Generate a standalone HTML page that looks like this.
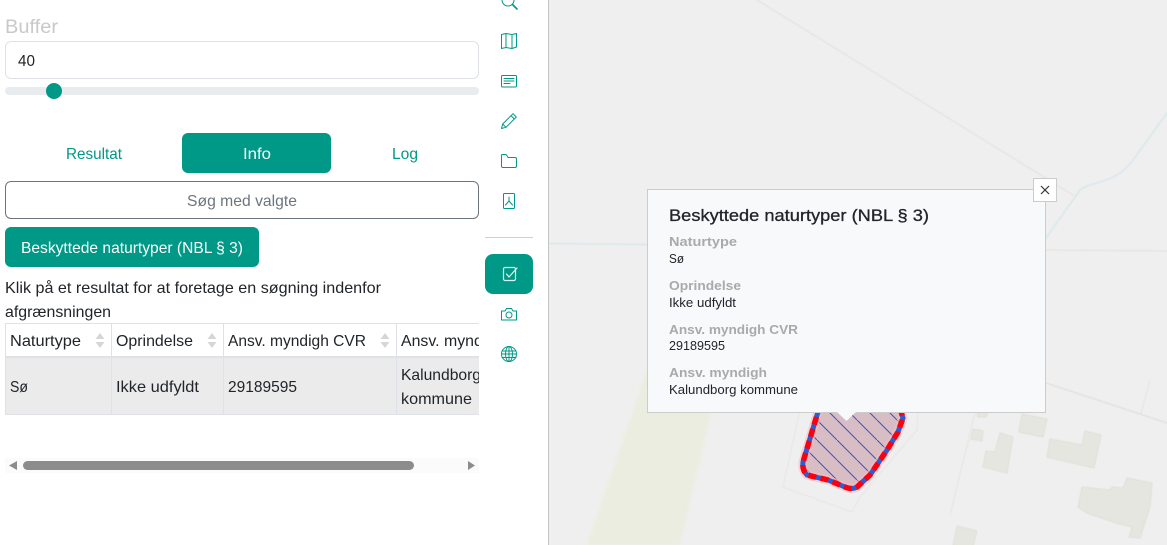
<!DOCTYPE html>
<html lang="da">
<head>
<meta charset="utf-8">
<title>Buffer</title>
<style>
html,body{margin:0;padding:0;width:1167px;height:545px;overflow:hidden;background:#fff}
body{position:relative;font-family:"Liberation Sans",sans-serif}
.b{position:absolute;box-sizing:border-box}
svg.o{position:absolute;left:0;top:0}
svg text{font-family:"Liberation Sans",sans-serif}
</style>
</head>
<body>
<!-- Map -->
<svg class="o" width="1167" height="545" viewBox="0 0 1167 545">
  <defs>
    <pattern id="h" width="20" height="20" patternUnits="userSpaceOnUse" patternTransform="translate(-3 0)">
      <path d="M-2,-2L22,22" stroke="#3a55c8" stroke-width="1"/>
    </pattern>
    <filter id="bl" x="-10%" y="-10%" width="120%" height="120%"><feGaussianBlur stdDeviation="1.5"/></filter>
    <filter id="sf" x="-5%" y="-5%" width="110%" height="110%"><feGaussianBlur stdDeviation="0.4"/></filter>
  </defs>
  <rect x="549" y="0" width="618" height="545" fill="#f0efef"/>
  <polygon points="650,360 724,360 680,545 587,545" fill="#ebede1" filter="url(#bl)"/>
  <g fill="none" stroke-linecap="round" filter="url(#sf)">
    <path d="M757,0L1073,195" stroke="#e3e3e1" stroke-width="1.300"/>
    <path d="M549,243.500L648,244.500" stroke="#d9e9ec" stroke-width="1.800"/>
    <path d="M1046,238L1080,190Q1084,187 1090,185Q1108,180 1117,175Q1125,170 1133,160L1167,113" stroke="#d9e8eb" stroke-width="1.800"/>
    <path d="M1046,250L1167,251" stroke="#e3e3e1" stroke-width="1.300"/>
    <path d="M1046,383L1167,423" stroke="#dfdfdd" stroke-width="1.400"/>
    <path d="M1150,380L1141,413" stroke="#e3e3e1" stroke-width="1"/>
    <path d="M975,413L950,515" stroke="#e3e3e1" stroke-width="1"/>
    <path d="M800,410L783,487L852,512L860,497L917,430L918,410" stroke="#e5e5e3" stroke-width="1"/>
  </g>
  <g fill="#e6e6e0" stroke="#dfded8" stroke-width="1" filter="url(#sf)">
    <polygon points="1022,414 1047,419 1043,437 1019,432"/>
    <polygon points="973,429 983,431 982,441 971,439"/>
    <polygon points="977,412 988,412 986,417 978,417"/>
    <polygon points="1000,433 1013,437 1007,473 983,467 986,451 995,452"/>
    <polygon points="1050,439 1082,445 1085,431 1101,435 1094,468 1047,457"/>
    <polygon points="1082,487 1110,490 1112,487 1123,488 1127,478 1152,483 1150,507 1140,538 1129,537 1132,527 1116,523 1087,513 1078,507"/>
    <polygon points="957,526 977,531 973,546 953,546"/>
  </g>
  <path d="M820,405L803,462Q802,470 807,475L828,480L845,487Q852,490 857,487L870,475L887,450L898,432L903,418L899,405Z" fill="#d8bdc4"/>
  <path d="M820,405L803,462Q802,470 807,475L828,480L845,487Q852,490 857,487L870,475L887,450L898,432L903,418L899,405Z" fill="url(#h)"/>
  <path d="M820,405L803,462Q802,470 807,475L828,480L845,487Q852,490 857,487L870,475L887,450L898,432L903,418L899,405" fill="none" stroke="#ffb9b9" stroke-opacity=".6" stroke-width="9"/>
  <path d="M820,405L803,462Q802,470 807,475L828,480L845,487Q852,490 857,487L870,475L887,450L898,432L903,418L899,405" fill="none" stroke="#2a5fd0" stroke-width="5"/>
  <path d="M820,405L803,462Q802,470 807,475L828,480L845,487Q852,490 857,487L870,475L887,450L898,432L903,418L899,405" fill="none" stroke="#fa0010" stroke-width="5.500" stroke-dasharray="8 4.500"/>
</svg>

<!-- Left panel -->
<div class="b" style="left:0;top:0;width:548px;height:545px;background:#fff"></div>
<div class="b" style="left:548px;top:0;width:1px;height:545px;background:#c4c4c4"></div>
<div class="b" style="left:5px;top:41px;width:474px;height:38px;border:1px solid #dee2e6;border-radius:6px;background:#fff"></div>
<div class="b" style="left:5px;top:87px;width:474px;height:8px;border-radius:4px;background:#e9ecef"></div>
<div class="b" style="left:46px;top:83px;width:16px;height:16px;border-radius:50%;background:#009886"></div>
<div class="b" style="left:182px;top:133px;width:149px;height:40px;border-radius:6px;background:#009886"></div>
<div class="b" style="left:5px;top:181px;width:474px;height:38px;border:1px solid #6c757d;border-radius:6px;background:#fff"></div>
<div class="b" style="left:5px;top:227px;width:254px;height:40px;border-radius:6px;background:#009886"></div>
<div class="b" style="left:485px;top:237px;width:48px;height:1px;background:#cfcfcf"></div>
<div class="b" style="left:485px;top:254px;width:48px;height:40px;border-radius:8px;background:#009886"></div>

<!-- Table -->
<div class="b" style="left:5px;top:323px;width:474px;height:93px;overflow:hidden">
  <div class="b" style="left:0;top:35px;width:474px;height:57px;background:#ebebeb"></div>
  <div class="b" style="left:0;top:0;width:474px;height:1px;background:#dee2e6"></div>
  <div class="b" style="left:0;top:33px;width:474px;height:2px;background:#dee2e6"></div>
  <div class="b" style="left:0;top:91px;width:474px;height:1px;background:#dee2e6"></div>
  <div class="b" style="left:0;top:0;width:1px;height:92px;background:#dee2e6"></div>
  <div class="b" style="left:106px;top:0;width:1px;height:92px;background:#dee2e6"></div>
  <div class="b" style="left:218px;top:0;width:1px;height:92px;background:#dee2e6"></div>
  <div class="b" style="left:391px;top:0;width:1px;height:92px;background:#dee2e6"></div>
</div>

<!-- Scrollbar -->
<div class="b" style="left:5px;top:458px;width:474px;height:15px;background:#fbfbfb"></div>
<div class="b" style="left:23px;top:461px;width:391px;height:9px;border-radius:4.500px;background:#8c8c8c"></div>

<!-- Popup -->
<div class="b" style="left:647px;top:189px;width:399px;height:224px;background:#f8f9fb;border:1px solid #cccccc"></div>
<div class="b" style="left:1033px;top:178px;width:24px;height:24px;background:#fff;border:1px solid #ccc"></div>

<!-- Overlay: text and icons -->
<svg class="o" width="1167" height="545" viewBox="0 0 1167 545">
  <defs><clipPath id="tc"><rect x="5" y="320" width="474" height="100"/></clipPath></defs>

  <polygon points="837,412 856,412 846.500,421" fill="#f8f9fb"/>
  <path d="M1041,186L1049,194M1049,186L1041,194" stroke="#333" stroke-width="1.200" fill="none"/>

  <polygon points="9,465.500 17,461 17,470" fill="#8c8c8c"/>
  <polygon points="475,465.500 468,461 468,470" fill="#8c8c8c"/>

  <g fill="#d6d6d6">
    <polygon points="100,333 104.500,339 95.500,339"/><polygon points="100,348 104.500,342 95.500,342"/>
    <polygon points="212,333 216.500,339 207.500,339"/><polygon points="212,348 216.500,342 207.500,342"/>
    <polygon points="385,333 389.500,339 380.500,339"/><polygon points="385,348 389.500,342 380.500,342"/>
  </g>

  <g font-size="19" fill="#c9c9c9"><text x="5" y="33" textLength="53" lengthAdjust="spacingAndGlyphs">Buffer</text></g>
  <g font-size="16" fill="#212529">
    <text x="18" y="66" textLength="17" lengthAdjust="spacingAndGlyphs">40</text>
    <text x="5" y="293" textLength="376" lengthAdjust="spacingAndGlyphs">Klik på et resultat for at foretage en søgning indenfor</text>
    <text x="5" y="317" textLength="106" lengthAdjust="spacingAndGlyphs">afgrænsningen</text>
  </g>
  <g font-size="16" fill="#009886">
    <text x="66" y="159" textLength="56" lengthAdjust="spacingAndGlyphs">Resultat</text>
    <text x="392" y="159" textLength="26" lengthAdjust="spacingAndGlyphs">Log</text>
  </g>
  <text x="243" y="159" font-size="16" fill="#fff" textLength="28" lengthAdjust="spacingAndGlyphs">Info</text>
  <text x="187" y="206" font-size="16" fill="#6c757d" textLength="110" lengthAdjust="spacingAndGlyphs">Søg med valgte</text>
  <text x="21" y="253" font-size="16" fill="#fff" textLength="222" lengthAdjust="spacingAndGlyphs">Beskyttede naturtyper (NBL § 3)</text>

  <g font-size="16" fill="#212529" clip-path="url(#tc)">
    <text x="10" y="346" textLength="71" lengthAdjust="spacingAndGlyphs">Naturtype</text>
    <text x="116" y="346" textLength="77" lengthAdjust="spacingAndGlyphs">Oprindelse</text>
    <text x="228" y="346" textLength="138" lengthAdjust="spacingAndGlyphs">Ansv. myndigh CVR</text>
    <text x="401" y="346" textLength="103" lengthAdjust="spacingAndGlyphs">Ansv. myndigh</text>
    <text x="10" y="392" textLength="18" lengthAdjust="spacingAndGlyphs">Sø</text>
    <text x="116" y="392" textLength="83" lengthAdjust="spacingAndGlyphs">Ikke udfyldt</text>
    <text x="228" y="392" textLength="69" lengthAdjust="spacingAndGlyphs">29189595</text>
    <text x="401" y="380" textLength="80" lengthAdjust="spacingAndGlyphs">Kalundborg</text>
    <text x="401" y="404" textLength="71" lengthAdjust="spacingAndGlyphs">kommune</text>
  </g>

  <text x="669" y="221" font-size="17" fill="#212529" stroke="#212529" stroke-width=".3" textLength="260" lengthAdjust="spacingAndGlyphs">Beskyttede naturtyper (NBL § 3)</text>
  <g font-size="13" font-weight="bold" fill="#aaaaaa">
    <text x="669" y="246" textLength="68" lengthAdjust="spacingAndGlyphs">Naturtype</text>
    <text x="669" y="290" textLength="72" lengthAdjust="spacingAndGlyphs">Oprindelse</text>
    <text x="669" y="334" textLength="129" lengthAdjust="spacingAndGlyphs">Ansv. myndigh CVR</text>
    <text x="669" y="377" textLength="98" lengthAdjust="spacingAndGlyphs">Ansv. myndigh</text>
  </g>
  <g font-size="12.500" fill="#212529">
    <text x="669" y="263" textLength="15" lengthAdjust="spacingAndGlyphs">Sø</text>
    <text x="669" y="307" textLength="67" lengthAdjust="spacingAndGlyphs">Ikke udfyldt</text>
    <text x="669" y="350" textLength="56" lengthAdjust="spacingAndGlyphs">29189595</text>
    <text x="669" y="394" textLength="129" lengthAdjust="spacingAndGlyphs">Kalundborg kommune</text>
  </g>

  <!-- Sidebar icons -->
  <g fill="none" stroke="#009886" stroke-width="1" stroke-linejoin="round" stroke-linecap="round">
    <circle cx="508" cy="0" r="6"/><path d="M512.500,4.500L517,9" stroke-width="1.600"/>
    <path d="M501.500,34.500L506,33.500L512,34.500L516.500,33.500V47L512,48.500L506,47.500L501.500,48.500Z M506,33.500V47.500 M512,34.500V48.500"/>
    <rect x="501.500" y="75.500" width="15" height="11.500" rx="1"/>
    <path d="M504,78.500H514 M504,81H514 M504,83.500H510"/>
    <path d="M513,113.700L516.300,117L506,127.300L501.500,128.500L502.700,124Z M511,115.700L514.300,119 M502.700,124L506,127.300"/>
    <path d="M501.500,156V166a1.500,1.500 0 0 0 1.500,1.500H515a1.500,1.500 0 0 0 1.500,-1.500V159a1.500,1.500 0 0 0 -1.500,-1.500H508L506.500,155a1,1 0 0 0 -1,-.5H502.500a1,1 0 0 0 -1,1.500Z"/>
    <rect x="503.500" y="193.500" width="11" height="15" rx="1"/>
    <path d="M509,197V201 M509,201L505.500,205 M509,201L512.500,205"/>
    <rect x="503.500" y="267.500" width="12" height="13" rx="1.500" stroke="#dff6f1" stroke-width="1.200"/>
    <path d="M506.500,274L509,277L517,268" stroke="#dff6f1" stroke-width="1.200"/>
    <path d="M501.500,311H505L506.500,308.500H511.500L513,311H516.500V320H501.500Z"/>
    <circle cx="509" cy="315" r="3"/>
    <circle cx="509" cy="354" r="7.500"/>
    <ellipse cx="509" cy="354" rx="3.500" ry="7.500"/>
    <path d="M509,346.500V361.500 M502,351H516 M501.500,354H516.500 M502,357.500H516"/>
  </g>
</svg>
</body>
</html>
